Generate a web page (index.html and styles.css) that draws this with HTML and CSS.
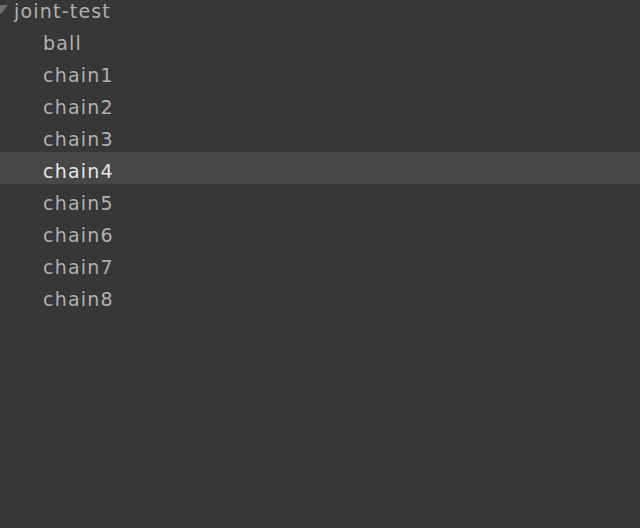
FILE: index.html
```html
<!DOCTYPE html>
<html>
<head>
<meta charset="utf-8">
<link rel="stylesheet" href="styles.css">
</head>
<body>
<div class="outliner">
  <div class="row root">
    <svg class="twisty" width="10" height="12" viewBox="0 0 10 12"><polygon points="-6,0 8,0 1,9" fill="#6b6b6b"/></svg>
    <span class="label">joint-test</span>
  </div>
  <div class="row child"><span class="label">ball</span></div>
  <div class="row child"><span class="label">chain1</span></div>
  <div class="row child"><span class="label">chain2</span></div>
  <div class="row child"><span class="label">chain3</span></div>
  <div class="row child selected"><span class="label">chain4</span></div>
  <div class="row child"><span class="label">chain5</span></div>
  <div class="row child"><span class="label">chain6</span></div>
  <div class="row child"><span class="label">chain7</span></div>
  <div class="row child"><span class="label">chain8</span></div>
</div>
</body>
</html>
```
FILE: styles.css
```css
html, body {
  margin: 0;
  padding: 0;
  background: #373737;
  height: 100%;
  overflow: hidden;
}
.outliner {
  margin-top: -8px;
  display: flex;
  flex-direction: column;
  font-family: "DejaVu Sans", sans-serif;
  font-size: 19px;
  letter-spacing: 1.2px;
  color: #b0b0b0;
}
.row {
  height: 32px;
  display: flex;
  align-items: center;
  position: relative;
}
.root .label {
  margin-left: 14px;
  padding-top: 6px;
}
.twisty {
  position: absolute;
  left: 0;
  top: 13px;
}
.child .label {
  margin-left: 43px;
  padding-top: 6px;
}
.selected {
  background: #474747;
  color: #e6e6e6;
}
```
